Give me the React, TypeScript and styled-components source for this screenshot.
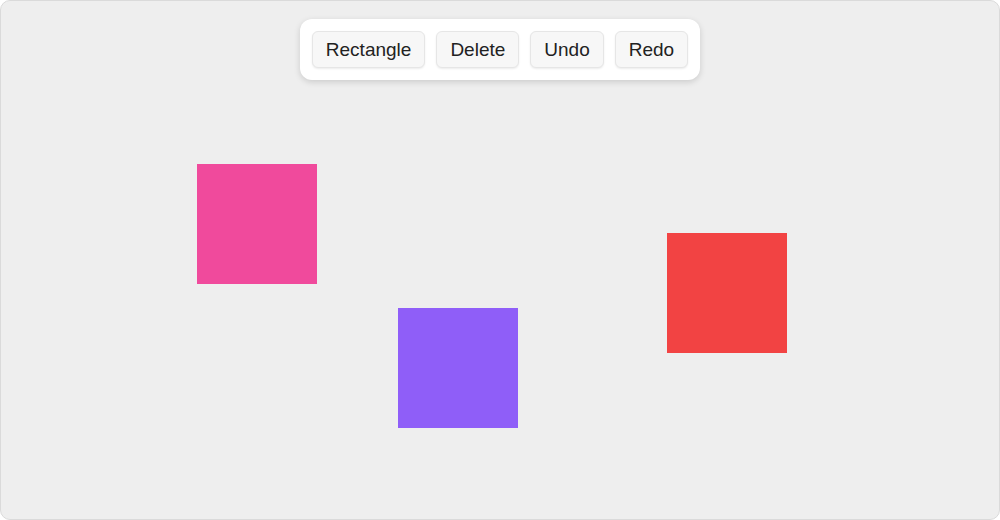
import styled, {createGlobalStyle} from 'styled-components'

const GlobalStyle = createGlobalStyle`
	body {
		margin: 0;
		background: #ffffff;
		font-family: 'Liberation Sans', Arial, sans-serif;
	}
`

const Canvas = styled.div`
	position: relative;
	box-sizing: border-box;
	width: 1000px;
	height: 520px;
	background: #eeeeee;
	border: 1px solid #dadada;
	border-radius: 10px;
	overflow: hidden;
	display: flex;
	justify-content: center;
	align-items: flex-start;
	padding-top: 18px;
`

const Toolbar = styled.div`
	position: relative;
	z-index: 2;
	display: flex;
	gap: 11px;
	padding: 12px;
	background: #ffffff;
	border-radius: 12px;
	box-shadow: 0 2px 6px rgba(0, 0, 0, 0.15);
`

const ToolButton = styled.button`
	height: 37px;
	padding: 0 13px;
	font-family: 'Liberation Sans', Arial, sans-serif;
	font-size: 19px;
	color: #222222;
	background: #f7f7f7;
	border: 1px solid #e6e6e6;
	border-radius: 6px;
	box-shadow: 0 1px 2px rgba(0, 0, 0, 0.08);
	cursor: pointer;
`

const Shape = styled.div<{$x: number; $y: number; $color: string}>`
	position: absolute;
	left: ${({$x}) => $x}px;
	top: ${({$y}) => $y}px;
	width: 120px;
	height: 120px;
	background: ${({$color}) => $color};
`

const shapes = [
	{id: 1, x: 196, y: 163, color: '#f04a9c'},
	{id: 2, x: 397, y: 307, color: '#8f5ef8'},
	{id: 3, x: 666, y: 232, color: '#f24343'},
]

const tools = ['Rectangle', 'Delete', 'Undo', 'Redo']

export default function App() {
	return (
		<>
			<GlobalStyle />
			<Canvas>
				<Toolbar>
					{tools.map((tool) => (
						<ToolButton key={tool}>{tool}</ToolButton>
					))}
				</Toolbar>
				{shapes.map((shape) => (
					<Shape key={shape.id} $x={shape.x} $y={shape.y} $color={shape.color} />
				))}
			</Canvas>
		</>
	)
}
